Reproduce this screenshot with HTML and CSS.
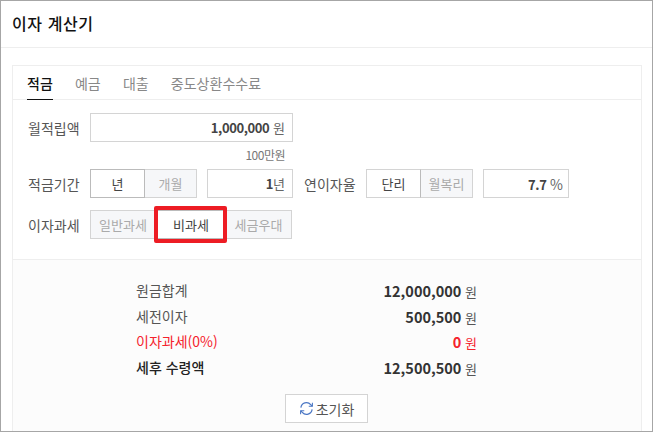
FILE: index.html
```html
<!DOCTYPE html>
<html lang="ko">
<head>
    <meta charset="UTF-8">
    <title>이자 계산기</title>
    <link rel="stylesheet" href="styles.css">
</head>
<body>
    <div class="window">
        <h1 class="title">이자 계산기</h1>
        <div class="card">
            <ul class="tabs">
                <li class="tab active">적금</li>
                <li class="tab">예금</li>
                <li class="tab">대출</li>
                <li class="tab">중도상환수수료</li>
            </ul>
            <div class="form">
                <div class="row">
                    <span class="label">월적립액</span>
                    <div class="input wide"><b>1,000,000</b> 원</div>
                </div>
                <div class="hint">100만원</div>
                <div class="row">
                    <span class="label">적금기간</span>
                    <div class="seg">
                        <span class="opt on w55">년</span>
                        <span class="opt w52">개월</span>
                    </div>
                    <div class="input short"><b>1</b>년</div>
                    <span class="label second">연이자율</span>
                    <div class="seg">
                        <span class="opt on soft w55">단리</span>
                        <span class="opt w52">월복리</span>
                    </div>
                    <div class="input short rate"><b>7.7</b> <span class="pct">%</span></div>
                </div>
                <div class="row tax">
                    <span class="label">이자과세</span>
                    <div class="seg">
                        <span class="opt w66">일반과세</span>
                        <span class="opt on w70 marked">비과세</span>
                        <span class="opt w66">세금우대</span>
                    </div>
                </div>
            </div>
            <div class="result">
                <div class="line"><span>원금합계</span><span><b>12,000,000</b> 원</span></div>
                <div class="line"><span>세전이자</span><span><b>500,500</b> 원</span></div>
                <div class="line red"><span>이자과세(0%)</span><span><b>0</b> 원</span></div>
                <div class="line total"><span>세후 수령액</span><span><b>12,500,500</b> 원</span></div>
                <button class="reset">
                    <svg width="15" height="15" viewBox="0 0 16 16" fill="none" stroke="#4a76c4" stroke-width="1.3">
                        <path d="M2 7a6 6 0 0 1 10.5-3.2L14 5.5"/>
                        <path d="M14.3 1.8v3.9h-3.9" stroke-width="1.1"/>
                        <path d="M14 9a6 6 0 0 1-10.5 3.2L2 10.5"/>
                        <path d="M1.7 14.2v-3.9h3.9" stroke-width="1.1"/>
                    </svg>
                    초기화
                </button>
            </div>
        </div>
    </div>
</body>
</html>
```
FILE: styles.css
```css
* {
    box-sizing: border-box;
}
html, body {
    margin: 0;
    padding: 0;
}
body {
    width: 653px;
    height: 432px;
    overflow: hidden;
    font-family: "Noto Sans CJK KR", "Noto Sans", sans-serif;
    font-size: 14px;
    color: #555;
    background: #fff;
}
.window {
    height: 432px;
    border: 1px solid #a6a6a6;
    overflow: hidden;
}
.title {
    height: 47px;
    margin: 0;
    padding: 0 0 0 11px;
    font-size: 16px;
    font-weight: 500;
    letter-spacing: 0.6px;
    line-height: 45px;
    color: #111;
    border-bottom: 1px solid #eee;
}
.card {
    margin: 17px 10px 0 11px;
    border: 1px solid #eee;
    height: 400px;
}
.tabs {
    display: flex;
    gap: 22.2px;
    height: 34px;
    margin: 0;
    padding: 0 0 0 14px;
    list-style: none;
    border-bottom: 1px solid #eee;
}
.tab {
    height: 34px;
    line-height: 35px;
    color: #888;
}
.tab.active {
    color: #111;
    font-weight: 500;
    border-bottom: 1px solid #111;
}
.form {
    height: 159px;
    padding: 13px 0 0 15px;
}
.row {
    display: flex;
    align-items: center;
}
.label {
    width: 62px;
    flex: none;
    color: #555;
}
.label.second {
    margin-left: 11px;
}
.input {
    height: 29px;
    line-height: 28px;
    padding-right: 7px;
    text-align: right;
    border: 1px solid #d4d4d4;
    font-size: 13px;
    color: #666;
}
.input b {
    font-size: 13px;
    letter-spacing: -0.4px;
    color: #444;
}
.input.wide {
    width: 203px;
}
.input.short {
    width: 86px;
    margin-left: 10px;
}
.input.rate {
    padding-right: 5px;
}
.pct {
    font-size: 14px;
}
.hint {
    height: 27px;
    padding-right: 356px;
    line-height: 26px;
    text-align: right;
    font-size: 12px;
    letter-spacing: -0.5px;
    color: #777;
}
.seg {
    display: flex;
}
.opt {
    height: 29px;
    line-height: 27px;
    font-size: 13px;
    text-align: center;
    border: 1px solid #d4d4d4;
    background: #f6f7f9;
    color: #aaa;
}
.opt + .opt {
    border-left: 0;
}
.opt.on {
    background: #fff;
    color: #444;
    border-color: #bbb;
    border-left: 1px solid #bbb;
}
.opt.soft {
    border-color: #d4d4d4 #bbb #d4d4d4 #d4d4d4;
}
.w52 { width: 52px; }
.w55 { width: 55px; }
.w66 { width: 66px; }
.w70 { width: 70px; }
.tax {
    margin-top: 12px;
}
.marked {
    position: relative;
}
.marked::after {
    content: "";
    box-sizing: border-box;
    position: absolute;
    left: -3px;
    top: -5px;
    width: 73px;
    height: 37px;
    border: 4px solid #ed1c24;
    border-radius: 2px;
}
.result {
    height: 173px;
    padding: 18px 0 0 123px;
    background: #fcfcfc;
    border-top: 1px solid #eee;
}
.line {
    display: flex;
    justify-content: space-between;
    width: 341px;
    height: 25.5px;
    line-height: 25px;
    font-size: 14px;
    color: #555;
}
.line span:last-child {
    font-size: 13px;
}
.line b {
    font-size: 14.5px;
    color: #333;
}
.line.red, .line.red b {
    color: #f5222d;
}
.line.total span:first-child {
    font-weight: 500;
    color: #222;
}
.reset {
    display: flex;
    align-items: center;
    justify-content: center;
    gap: 2px;
    width: 83px;
    height: 29px;
    margin: 14px 0 0 149px;
    padding: 0;
    border: 1px solid #d4d4d4;
    background: #fff;
    font: inherit;
    color: #555;
}
```
